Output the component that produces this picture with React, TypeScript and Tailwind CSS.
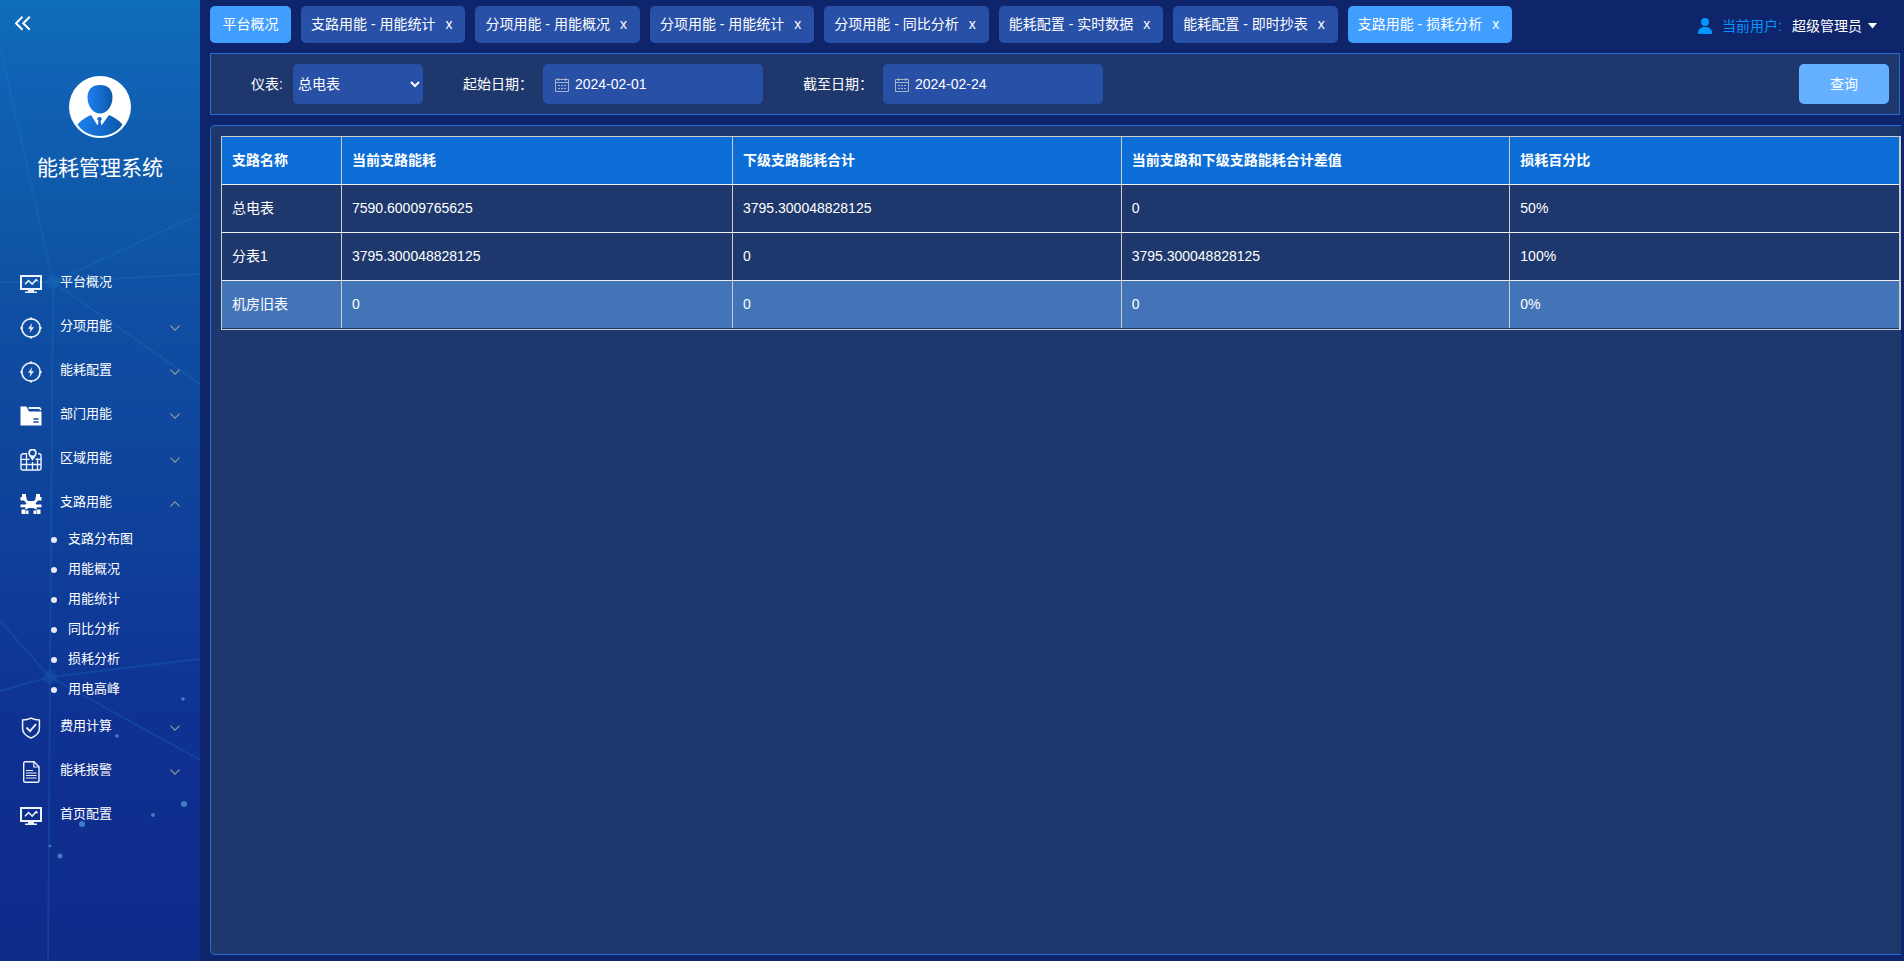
import React, { useState } from 'react';

type IconName = 'monitor' | 'bolt' | 'folder' | 'map' | 'branch' | 'shield' | 'file';

interface MenuItem {
  label: string;
  icon: IconName;
  expandable?: boolean;
  children?: string[];
}

const menu: MenuItem[] = [
  { label: '平台概况', icon: 'monitor' },
  { label: '分项用能', icon: 'bolt', expandable: true },
  { label: '能耗配置', icon: 'bolt', expandable: true },
  { label: '部门用能', icon: 'folder', expandable: true },
  { label: '区域用能', icon: 'map', expandable: true },
  {
    label: '支路用能', icon: 'branch', expandable: true,
    children: ['支路分布图', '用能概况', '用能统计', '同比分析', '损耗分析', '用电高峰'],
  },
  { label: '费用计算', icon: 'shield', expandable: true },
  { label: '能耗报警', icon: 'file', expandable: true },
  { label: '首页配置', icon: 'monitor' },
];

const initialTabs = [
  '支路用能 - 用能统计',
  '分项用能 - 用能概况',
  '分项用能 - 用能统计',
  '分项用能 - 同比分析',
  '能耗配置 - 实时数据',
  '能耗配置 - 即时抄表',
  '支路用能 - 损耗分析',
];

const columns = [
  { title: '支路名称', width: 'w-[120px]' },
  { title: '当前支路能耗', width: 'w-[391px]' },
  { title: '下级支路能耗合计', width: '' },
  { title: '当前支路和下级支路能耗合计差值', width: '' },
  { title: '损耗百分比', width: '' },
];

const rows = [
  ['总电表', '7590.60009765625', '3795.300048828125', '0', '50%'],
  ['分表1', '3795.300048828125', '0', '3795.300048828125', '100%'],
  ['机房旧表', '0', '0', '0', '0%'],
];

function MenuIcon({ name }: { name: IconName }) {
  return (
    <svg viewBox="0 0 22 22" className="w-[22px] h-[22px] shrink-0" fill="none" stroke="#eef3fb" strokeWidth="1.5" aria-hidden="true">
      {name === 'monitor' && (
        <>
          <rect x="1" y="3" width="20" height="13" strokeWidth="2" />
          <path d="M5 11.2 8.5 7.5l3.7 3.6 4-4.4 1.4 1.5" />
          <path d="M8 16.500h6V18.500h3V20H5v-1.500h3z" fill="#eef3fb" stroke="none" />
        </>
      )}
      {name === 'bolt' && (
        <>
          <circle cx="11" cy="11" r="9.2" strokeWidth="1.7" />
          <path d="M11 .4v2M11 19.6v2M.4 11h2M19.6 11h2" strokeWidth="2" />
          <path d="M12.2 6 8 11.8h2.6L9.6 16l4.4-5.8h-2.8z" fill="#eef3fb" stroke="none" />
        </>
      )}
      {name === 'folder' && (
        <>
          <path d="M.5 1.5h6l2.500 5H21.500v14H.5z" fill="#fff" stroke="none" />
          <path d="M8.500 3h11l1.500 1.800" strokeWidth="1.8" />
          <path d="M13.500 14h5M13.500 17h5" stroke="#1048a0" strokeWidth="1.3" />
        </>
      )}
      {name === 'map' && (
        <>
          <path d="M7 4.800H3a2 2 0 0 0-2 2V19a2 2 0 0 0 2 2h16a2 2 0 0 0 2-2V6.800a2 2 0 0 0-2-2h-1" strokeWidth="1.4" />
          <path d="M1 10.300h8.500M15.500 10.300H21M1 15.500h20M6.500 4.800V21M12.500 13v8M17.500 9v12" strokeWidth="1.3" />
          <path fillRule="evenodd" d="M12.500-.5a4.300 4.300 0 0 1 4.300 4.300c0 2.700-2.300 4.700-4.300 8-2-3.300-4.300-5.300-4.300-8A4.300 4.300 0 0 1 12.500-.5zm0 2a2.500 2.500 0 1 0 0 5 2.500 2.500 0 0 0 0-5z" fill="#eef3fb" stroke="none" />
        </>
      )}
      {name === 'branch' && (
        <g fill="#fff" stroke="none">
          <path d="M2 1h4v4H2zM16 1h4v4h-4zM.5 4h6v3.500h-6zM15.500 4h6v3.500h-6z" />
          <path d="M5 5.500 8.500 8h5L17 5.500l1 2-2.500 3 1.500 2-.5 4-3.500-1.500h-4L5.500 16.500l-.5-4 1.500-2-2.500-3z" />
          <path d="M.5 11.500h21v2.800H.5zM1.500 16.500h4v4.500h-4zM16.500 16.500h4v4.500h-4zM6 17.500h2.500V21H6zM13.500 17.500H16V21h-2.500z" />
        </g>
      )}
      {name === 'shield' && (
        <>
          <path d="M11 1.2c2.7 1.4 5.4 1.9 8.400 1.9v8.5c0 4.600-3.700 7.600-8.400 9.400-4.700-1.800-8.400-4.800-8.400-9.400V3.100c3 0 5.700-.5 8.400-1.900z" />
          <path d="m6.5 10.5 3.500 3.600 6-7" strokeWidth="1.8" />
        </>
      )}
      {name === 'file' && (
        <>
          <path d="M3.700 2.200a1.500 1.500 0 0 1 1.500-1.500h8.800l5 5v14a1.500 1.500 0 0 1-1.500 1.500H5.200a1.500 1.500 0 0 1-1.500-1.500z" strokeWidth="1.4" />
          <path d="M13.800 1v5h5" strokeWidth="1.2" />
          <path d="M6 9.500h7M6 12h10.500M6 14.500h10.500M6 17h10.500" strokeWidth="1.2" />
        </>
      )}
    </svg>
  );
}

function Chevron({ up }: { up?: boolean }) {
  return (
    <svg viewBox="0 0 10 6" className="w-2.5 h-1.5" fill="none" stroke="#949c99" strokeWidth="1.2" aria-hidden="true">
      <path d={up ? 'M.5 5.4 5 .9l4.500 4.500' : 'M.5.6 5 5.100 9.500.6'} />
    </svg>
  );
}

function SidebarBackdrop() {
  return (
    <svg viewBox="0 0 200 961" className="absolute top-0 left-0 w-[200px] h-[961px] pointer-events-none" fill="none" aria-hidden="true">
      <g stroke="#1a80c4" strokeOpacity=".25" strokeWidth="1.8">
        <path d="M0 45 53 282 200 214M0 282h53l147-8M53 282l147 102M53 282l-3 395-2 284" />
        <path d="m0 621 50 56 150-18M0 691l50-14 150 83" />
      </g>
      <circle cx="53" cy="282" r="7" fill="#1470b8" fillOpacity=".4" />
      <circle cx="50" cy="677" r="7" fill="#1458b0" fillOpacity=".4" />
      <g fill="#4f8fd0" fillOpacity=".8">
        <circle cx="183" cy="699" r="1.8" />
        <circle cx="117" cy="736" r="1.8" />
        <circle cx="184" cy="804" r="3" />
        <circle cx="153" cy="815" r="2" />
        <circle cx="82" cy="824" r="3" />
        <circle cx="50" cy="846" r="1.3" />
        <circle cx="60" cy="856" r="2.5" />
      </g>
    </svg>
  );
}

function Avatar() {
  return (
    <svg viewBox="0 0 62 62" className="w-[62px] h-[62px]" aria-hidden="true">
      <defs>
        <linearGradient id="avatar" x1="0" x2="1">
          <stop offset="0" stopColor="#1d80f0" />
          <stop offset="1" stopColor="#0c58ac" />
        </linearGradient>
      </defs>
      <circle cx="31" cy="31" r="31" fill="#fff" />
      <path d="M31 9c8 0 12.500 4.500 12.500 12.500C43.500 30 38 37.500 31 37.500S18.500 30 18.500 21.500C18.500 13.500 23 9 31 9z" fill="url(#avatar)" />
      <path d="M22 39c-5 2-10 5.500-13.500 9.500C13.500 56 21.500 60 31 60s17.500-4 22.500-11.500C50 44.500 45 41 40 39l-7.500 10.500-1-4.500 1.500-2-1.500-2h-2l-1.500 2 1.500 2-1 4.500z" fill="url(#avatar)" />
    </svg>
  );
}

function Sidebar() {
  const [open, setOpen] = useState('支路用能');

  return (
    <aside className="relative w-[200px] shrink-0 overflow-hidden text-white bg-[linear-gradient(180deg,#0f6db9_0%,#1060b4_10%,#0f58a8_22%,#0f4fa3_32%,#0f449b_50%,#0f3b98_63%,#0f3292_75%,#0f2d8d_90%,#0e2b8a_100%)]">
      <SidebarBackdrop />
      <div className="relative flex flex-col">
        <button type="button" aria-label="收起菜单" className="mt-4 ml-[15px] w-4 h-4">
          <svg viewBox="0 0 16 16" fill="none" stroke="#fff" strokeWidth="2" aria-hidden="true">
            <path d="M7.500.8 1 7.300l6.500 6.500M14.800.8 8.300 7.300l6.500 6.500" />
          </svg>
        </button>
        <div className="flex flex-col items-center pt-11">
          <Avatar />
          <h1 className="mt-4 h-[107px] text-[21px] leading-7">能耗管理系统</h1>
        </div>
        <nav>
          <ul>
            {menu.map(item => (
              <li key={item.label}>
                <button type="button"
                  onClick={() => item.expandable && setOpen(open === item.label ? '' : item.label)}
                  className="w-full h-11 pt-0.5 px-5 flex items-center text-[13px] text-left">
                  <MenuIcon name={item.icon} />
                  <span className="flex-1 pl-[18px] pb-1">{item.label}</span>
                  {item.expandable && <Chevron up={open === item.label} />}
                </button>
                {item.children && open === item.label && (
                  <ul>
                    {item.children.map(child => (
                      <li key={child}>
                        <a href="#" className="h-[30px] pl-[51px] flex items-center gap-[11px] text-[13px]">
                          <span className="w-1.5 h-1.5 rounded-full bg-[#e8ebf2]" />
                          <span className="pb-0.5">{child}</span>
                        </a>
                      </li>
                    ))}
                  </ul>
                )}
              </li>
            ))}
          </ul>
        </nav>
      </div>
    </aside>
  );
}

function DateField({ id, label, initial }: { id: string; label: string; initial: string }) {
  const [value, setValue] = useState(initial);

  return (
    <div className="flex items-center gap-2.5">
      <label htmlFor={id}>{label}</label>
      <div className="relative">
        <svg viewBox="0 0 14 14" className="absolute left-3 top-3.5 w-3.5 h-3.5 pointer-events-none" fill="none" stroke="#a9b3c6" aria-hidden="true">
          <path d="M.5 1.5h13v12H.5zM.5 4.500h13M3.500 0v3M10.500 0v3" />
          <path d="M3 7.500h2M6 7.500h2M9 7.500h2M3 10.500h2M6 10.500h2M9 10.500h2" />
        </svg>
        <input id={id} type="text" value={value} onChange={e => setValue(e.target.value)}
          className="w-[220px] h-10 pl-8 pr-3 rounded-[5px] bg-[#2850a7] outline-none" />
      </div>
    </div>
  );
}

function LossTable() {
  return (
    <div className="border border-r-2 border-[#ccc] pb-px">
      <table className="w-full table-fixed border-separate border-spacing-0 text-left">
        <thead>
          <tr className="bg-[#0b6dd5]">
            {columns.map((c, i) => (
              <th key={c.title} scope="col"
                className={`h-12 px-2.5 pb-0.5 font-bold border-b border-b-[#eee] ${c.width} ${i < columns.length - 1 ? 'border-r border-r-[#ccc]' : ''}`}>
                {c.title}
              </th>
            ))}
          </tr>
        </thead>
        <tbody>
          {rows.map((row, r) => (
            <tr key={row[0]} className={r === rows.length - 1 ? 'bg-[#4474b8]' : ''}>
              {row.map((cell, i) => (
                <td key={i}
                  className={`px-2.5 pb-0.5 ${r < rows.length - 1 ? 'h-12 border-b border-b-[#eee]' : 'h-[47px]'} ${i < row.length - 1 ? 'border-r border-r-[#ccc]' : ''}`}>
                  {cell}
                </td>
              ))}
            </tr>
          ))}
        </tbody>
      </table>
    </div>
  );
}

export default function App() {
  const [tabs, setTabs] = useState(initialTabs);
  const [active, setActive] = useState('支路用能 - 损耗分析');
  const [meter, setMeter] = useState('总电表');

  return (
    <div className="flex min-h-screen bg-[#0f256b] text-white text-sm font-['Liberation_Sans','Noto_Sans_CJK_SC',sans-serif]">
      <Sidebar />
      <main className="flex-1 min-w-0 flex flex-col gap-2.5 py-1.5 pl-2.5 pr-[3px]">
        <header className="flex items-center justify-between">
          <div className="flex gap-2.5 whitespace-nowrap">
            <button type="button" className="w-[81px] h-[37px] pb-0.5 rounded-[5px] bg-[#409eff]">平台概况</button>
            {tabs.map(tab => (
              <div key={tab}
                className={`h-[37px] pl-2.5 pr-[13px] pb-0.5 flex items-center gap-2.5 rounded-[5px] ${tab === active ? 'bg-[#409eff]' : 'bg-[#2850a7]'}`}>
                <button type="button" onClick={() => setActive(tab)}>{tab}</button>
                <button type="button" aria-label={`关闭 ${tab}`} onClick={() => setTabs(tabs.filter(t => t !== tab))}>x</button>
              </div>
            ))}
          </div>
          <button type="button" className="flex items-center pt-0.5 pr-6 whitespace-nowrap">
            <svg viewBox="0 0 14 16" className="w-3.5 h-4" fill="#0095ff" aria-hidden="true">
              <circle cx="7" cy="4" r="4" />
              <path d="M0 14.500C0 11 3 9 7 9s7 2 7 5.500c0 1-.5 1.500-1.500 1.500h-11C.5 16 0 15.500 0 14.500z" />
            </svg>
            <span className="pl-2.5 text-[#0095ff]">当前用户:</span>
            <span className="pl-2.5">超级管理员</span>
            <svg viewBox="0 0 9 6" className="ml-1.5 w-[9px] h-1.5" fill="#fff" aria-hidden="true">
              <path d="M0 0h9L4.500 5.500z" />
            </svg>
          </button>
        </header>

        <form onSubmit={e => e.preventDefault()}
          className="mr-px pl-10 pr-2.5 py-2.5 flex items-center gap-10 border border-[#2a6dca] bg-[#1e386e]">
          <div className="flex items-center gap-2.5">
            <label htmlFor="meter">仪表:</label>
            <select id="meter" value={meter} onChange={e => setMeter(e.target.value)}
              className="w-[130px] h-10 rounded-[5px] bg-[#2850a7] px-px">
              {rows.map(r => <option key={r[0]}>{r[0]}</option>)}
            </select>
          </div>
          <DateField id="start" label="起始日期：" initial="2024-02-01" />
          <DateField id="end" label="截至日期：" initial="2024-02-24" />
          <button type="submit" className="ml-auto w-[90px] h-10 rounded-[5px] bg-[#66b1ff]">查询</button>
        </form>

        <section className="flex-1 pt-2.5 pl-2.5 border border-r-0 border-[#2a6dca] rounded-l-[5px] bg-[#1e386e]">
          <LossTable />
        </section>
      </main>
    </div>
  );
}
